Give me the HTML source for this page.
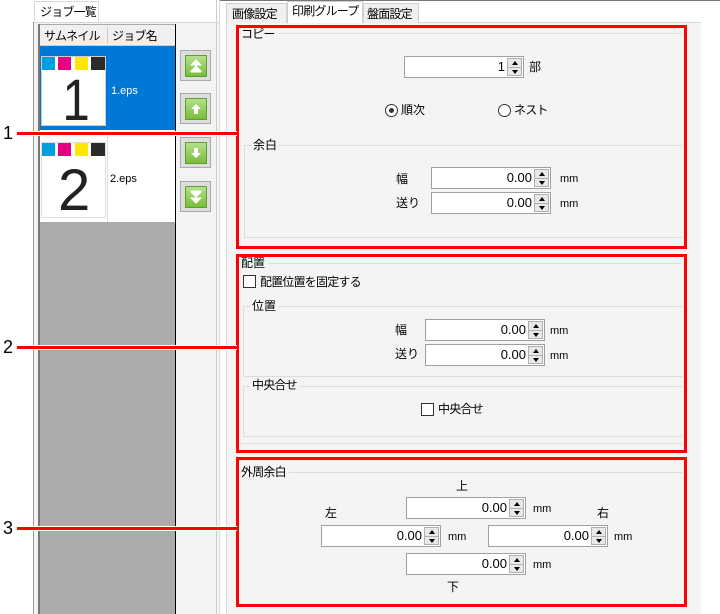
<!DOCTYPE html>
<html><head><meta charset="utf-8"><style>
*{box-sizing:border-box;margin:0;padding:0}
body{width:720px;height:614px;position:relative;background:#fff;font-family:"Liberation Sans","Noto Sans CJK JP",sans-serif;font-size:12px;color:#000;overflow:hidden}
.a{position:absolute}
.t{position:absolute;white-space:nowrap;line-height:14px}
.inp{position:absolute;height:22px;background:#fff;border:1px solid #a0a0a0}
.inp .v{position:absolute;right:18px;top:3px;font-size:13px;line-height:14px}
.inp .sp{position:absolute;right:1px;top:1px;width:15px;height:18px;border:1px solid #b0b0b0;background:#e8e8e8}
.inp .sp:after{content:"";position:absolute;left:0;right:0;top:8px;border-top:1px solid #b0b0b0}
.inp .up{position:absolute;left:4px;top:2px;border:3px solid transparent;border-bottom:4px solid #000;border-top:0}
.inp .dn{position:absolute;left:4px;top:11px;border:3px solid transparent;border-top:4px solid #000;border-bottom:0}
.red{position:absolute;border:3px solid #f00}
.gl{position:absolute;border:1px solid #dcdcdc;border-right:none}
.cb{position:absolute;width:13px;height:13px;border:1px solid #333;background:#fff}
.btn{position:absolute;left:180px;width:31px;height:31px;background:#ddd;border:1px solid #aaa}
.btn i{position:absolute;left:4px;top:4px;width:22px;height:22px;background:linear-gradient(#b5e08a,#77bd3a);border:1px solid #5fa02c}
.btn svg{position:absolute;left:4px;top:4px}
.call{position:absolute;left:17px;width:220px;height:5px;background:#fff}
.call:after{content:"";position:absolute;left:0;right:0;top:1px;height:3px;background:#f00}
.num{position:absolute;left:3px;font-size:18px;line-height:18px}
.tab{letter-spacing:-0.8px}
</style></head><body>
<div class="a" style="left:33px;top:22px;width:2px;height:592px;border-left:1px solid #999;background:#f3f3f3"></div>
<div class="a" style="left:34px;top:1px;width:65px;height:22px;background:#fff;border:1px solid #d8d8d8;border-bottom:none"></div>
<div class="t tab" style="left:40px;top:5px">ジョブ一覧</div>
<div class="a" style="left:35px;top:22px;width:184px;height:592px;background:#f3f3f3;border-top:1px solid #d8d8d8"></div>
<div class="a" style="left:38px;top:24px;width:138px;height:590px;background:#ababab;border-left:2px solid #777;border-right:1px solid #000"></div>
<div class="a" style="left:40px;top:25px;width:135px;height:21px;background:#f0f0f0;border-bottom:1px solid #ccc"></div>
<div class="a" style="left:107px;top:27px;width:1px;height:17px;background:#ccc"></div>
<div class="t tab" style="left:44px;top:29px">サムネイル</div>
<div class="t tab" style="left:112px;top:29px">ジョブ名</div>
<div class="a" style="left:40px;top:46px;width:135px;height:84px;background:#0078d7"></div>
<div class="a" style="left:40px;top:130px;width:135px;height:92px;background:#fff"></div>
<div class="a" style="left:107px;top:130px;width:1px;height:92px;background:#ddd"></div>
<div class="a" style="left:41px;top:56px;width:65px;height:70px;background:#fff;border:1px solid #ccc"></div>
<div class="a" style="left:41px;top:142px;width:65px;height:76px;background:#fff;border:1px solid #ddd"></div>
<div class="a" style="left:42px;top:57px;width:13px;height:13px;background:#00a0e0"></div>
<div class="a" style="left:58px;top:57px;width:13px;height:13px;background:#e4007f"></div>
<div class="a" style="left:75px;top:57px;width:13px;height:13px;background:#ffe800"></div>
<div class="a" style="left:91px;top:57px;width:14px;height:13px;background:#2b2b2b"></div>
<div class="a" style="left:42px;top:143px;width:13px;height:13px;background:#00a0e0"></div>
<div class="a" style="left:58px;top:143px;width:13px;height:13px;background:#e4007f"></div>
<div class="a" style="left:75px;top:143px;width:13px;height:13px;background:#ffe800"></div>
<div class="a" style="left:91px;top:143px;width:14px;height:13px;background:#2b2b2b"></div>
<div class="t" style="left:60px;top:76px;font-size:58px;line-height:50px;color:#222;transform:scaleX(0.85)">1</div>
<div class="t" style="left:58px;top:166px;font-size:58px;line-height:50px;color:#222">2</div>
<div class="t" style="left:111px;top:84px;color:#fff;font-size:11px">1.eps</div>
<div class="t" style="left:110px;top:172px;font-size:11px">2.eps</div>
<div class="btn" style="top:50px"><i></i><svg width="22" height="22"><path d="M11 5 L16 10 H6Z M11 11 L16 16 H6Z M6 17h10" fill="#fff" stroke="#fff" stroke-width="1"/></svg></div>
<div class="btn" style="top:93px"><i></i><svg width="22" height="22"><path d="M11 6 L16 11 H13 V16 H9 V11 H6Z" fill="#fff"/></svg></div>
<div class="btn" style="top:137px"><i></i><svg width="22" height="22"><path d="M11 16 L16 11 H13 V6 H9 V11 H6Z" fill="#fff"/></svg></div>
<div class="btn" style="top:181px"><i></i><svg width="22" height="22"><path d="M6 5h10 M11 11 L16 6 H6Z M11 17 L16 12 H6Z" fill="#fff" stroke="#fff" stroke-width="1"/></svg></div>
<div class="a" style="left:216px;top:0;width:1px;height:614px;background:#ccc"></div>
<div class="a" style="left:219px;top:0;width:1px;height:614px;background:#ddd"></div>
<div class="a" style="left:220px;top:0;width:500px;height:1px;background:#777"></div>
<div class="a" style="left:226px;top:22px;width:475px;height:592px;background:#f4f4f4;border-left:1px solid #d8d8d8;border-top:1px solid #d8d8d8"></div>
<div class="a" style="left:226px;top:3px;width:61px;height:20px;background:#f0f0f0;border:1px solid #d0d0d0;border-bottom:none"></div>
<div class="a" style="left:287px;top:1px;width:76px;height:22px;background:#fff;border:1px solid #d0d0d0;border-bottom:none"></div>
<div class="a" style="left:363px;top:3px;width:56px;height:20px;background:#f0f0f0;border:1px solid #d0d0d0;border-bottom:none"></div>
<div class="t tab" style="left:232px;top:7px">画像設定</div>
<div class="t tab" style="left:292px;top:4px">印刷グループ</div>
<div class="t tab" style="left:367px;top:7px">盤面設定</div>
<div class="gl" style="left:240px;top:33px;width:442px;height:210px;border-bottom:none;border-left:none"></div>
<div class="t tab" style="left:241px;top:27px;background:#f4f4f4;padding-right:3px">コピー</div>
<div class="inp" style="left:404px;top:56px;width:120px"><span class="v">1</span><span class="sp"><i class="up"></i><i class="dn"></i></span></div>
<div class="t" style="left:529px;top:60px">部</div>
<div class="a" style="left:385px;top:104px;width:13px;height:13px;border-radius:50%;border:1px solid #333;background:#fff"><div class="a" style="left:3px;top:3px;width:5px;height:5px;border-radius:50%;background:#333"></div></div>
<div class="t" style="left:401px;top:103px">順次</div>
<div class="a" style="left:498px;top:104px;width:13px;height:13px;border-radius:50%;border:1px solid #333;background:#fff"></div>
<div class="t tab" style="left:514px;top:103px">ネスト</div>
<div class="gl" style="left:244px;top:145px;width:438px;height:93px;border-right:none"></div>
<div class="t" style="left:251px;top:138px;background:#f4f4f4;padding:0 2px">余白</div>
<div class="t" style="left:396px;top:172px">幅</div>
<div class="inp" style="left:431px;top:167px;width:120px"><span class="v">0.00</span><span class="sp"><i class="up"></i><i class="dn"></i></span></div>
<div class="t" style="left:560px;top:172px;font-size:11px">mm</div>
<div class="t" style="left:396px;top:196px">送り</div>
<div class="inp" style="left:431px;top:192px;width:120px"><span class="v">0.00</span><span class="sp"><i class="up"></i><i class="dn"></i></span></div>
<div class="t" style="left:560px;top:197px;font-size:11px">mm</div>
<div class="a" style="left:240px;top:263px;width:442px;height:1px;background:#dcdcdc"></div>
<div class="t" style="left:241px;top:256px;background:#f4f4f4;padding-right:3px">配置</div>
<div class="cb" style="left:243px;top:275px"></div>
<div class="t tab" style="left:260px;top:275px">配置位置を固定する</div>
<div class="gl" style="left:243px;top:306px;width:439px;height:71px"></div>
<div class="t" style="left:250px;top:299px;background:#f4f4f4;padding:0 2px">位置</div>
<div class="t" style="left:395px;top:323px">幅</div>
<div class="inp" style="left:425px;top:319px;width:120px"><span class="v">0.00</span><span class="sp"><i class="up"></i><i class="dn"></i></span></div>
<div class="t" style="left:550px;top:324px;font-size:11px">mm</div>
<div class="t" style="left:395px;top:347px">送り</div>
<div class="inp" style="left:425px;top:344px;width:120px"><span class="v">0.00</span><span class="sp"><i class="up"></i><i class="dn"></i></span></div>
<div class="t" style="left:550px;top:349px;font-size:11px">mm</div>
<div class="gl" style="left:243px;top:386px;width:439px;height:51px"></div>
<div class="t tab" style="left:250px;top:378px;background:#f4f4f4;padding:0 2px">中央合せ</div>
<div class="cb" style="left:421px;top:403px"></div>
<div class="t tab" style="left:438px;top:402px">中央合せ</div>
<div class="a" style="left:241px;top:443px;width:441px;height:1px;background:#dcdcdc"></div>
<div class="a" style="left:240px;top:472px;width:442px;height:1px;background:#dcdcdc"></div>
<div class="t tab" style="left:241px;top:465px;background:#f4f4f4;padding-right:3px">外周余白</div>
<div class="t" style="left:456px;top:479px">上</div>
<div class="inp" style="left:406px;top:497px;width:120px"><span class="v">0.00</span><span class="sp"><i class="up"></i><i class="dn"></i></span></div>
<div class="t" style="left:533px;top:502px;font-size:11px">mm</div>
<div class="t" style="left:325px;top:506px">左</div>
<div class="t" style="left:597px;top:506px">右</div>
<div class="inp" style="left:321px;top:525px;width:120px"><span class="v">0.00</span><span class="sp"><i class="up"></i><i class="dn"></i></span></div>
<div class="t" style="left:448px;top:530px;font-size:11px">mm</div>
<div class="inp" style="left:488px;top:525px;width:120px"><span class="v">0.00</span><span class="sp"><i class="up"></i><i class="dn"></i></span></div>
<div class="t" style="left:614px;top:530px;font-size:11px">mm</div>
<div class="inp" style="left:406px;top:553px;width:120px"><span class="v">0.00</span><span class="sp"><i class="up"></i><i class="dn"></i></span></div>
<div class="t" style="left:533px;top:558px;font-size:11px">mm</div>
<div class="t" style="left:447px;top:580px">下</div>
<div class="red" style="left:236px;top:25px;width:451px;height:224px"></div>
<div class="red" style="left:236px;top:254px;width:451px;height:199px"></div>
<div class="red" style="left:236px;top:457px;width:451px;height:150px"></div>
<div class="call" style="top:131px"></div><div class="num" style="top:124px">1</div>
<div class="call" style="top:345px"></div><div class="num" style="top:338px">2</div>
<div class="call" style="top:526px"></div><div class="num" style="top:519px">3</div>
</body></html>
